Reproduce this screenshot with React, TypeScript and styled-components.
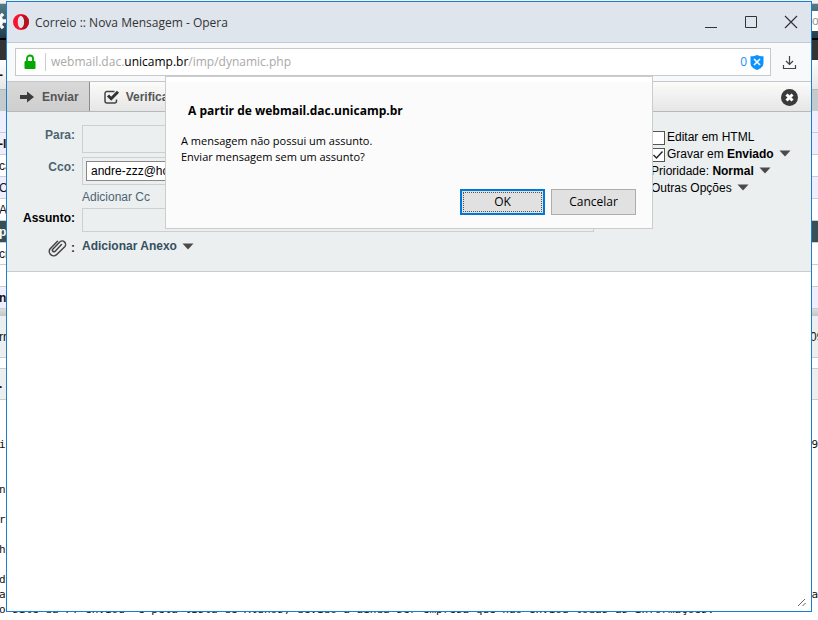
import React from "react";
import styled, { createGlobalStyle } from "styled-components";

const GlobalStyle = createGlobalStyle`
  * { box-sizing: border-box; }
  body { margin: 0; background: #fff; }
  button, input { font: inherit; color: inherit; }
`;

const system = `"Open Sans", "Noto Sans", sans-serif`;
const web = `"Liberation Sans", Arial, sans-serif`;
const mono = `"DejaVu Sans Mono", monospace`;

const Desktop = styled.div`
  position: relative;
  min-height: 100vh;
  overflow: hidden;
  background: #fff;
`;

/* Mailbox page behind the compose window */
const Mailbox = styled.div`
  display: flex;
  flex-direction: column;
  font: 12px/20px ${web};
  color: #111;
`;

const Strip = styled.div<{ $h: number; $bg?: string; $line?: string; $bold?: boolean; $color?: string }>`
  display: flex;
  justify-content: space-between;
  align-items: center;
  height: ${(p) => p.$h}px;
  overflow: hidden;
  white-space: pre;
  background: ${(p) => p.$bg || "#fff"};
  border-bottom: ${(p) => (p.$line ? `1px solid ${p.$line}` : "none")};
  font-weight: ${(p) => (p.$bold ? 700 : 400)};
  color: ${(p) => p.$color || "inherit"};
`;

const Edge = styled.span`
  width: 7px;
  overflow: hidden;
  text-indent: -1px;
`;

const MessageLine = styled.div`
  display: flex;
  justify-content: space-between;
  height: 15px;
  overflow: hidden;
  white-space: pre;
  text-indent: -1px;
  font: 11px/15px ${mono};
  color: #111;
`;

/* Compose window */
const Window = styled.main`
  position: absolute;
  inset: 1px 6px 8px;
  display: flex;
  flex-direction: column;
  border: 1px solid #1a7fd0;
  background: #fff;
`;

const TitleBar = styled.header`
  display: flex;
  align-items: center;
  gap: 6px;
  height: 41px;
  padding: 0 13px 0 6px;
  background: #dfe5ed;
  border-bottom: 1px solid #c6cacf;
  font: 12px/16px ${system};
  color: #333;
`;

const WindowTitle = styled.h1`
  flex: 1;
  margin: 0;
  padding-top: 2px;
  font: inherit;
`;

const WindowControls = styled.div`
  display: flex;
  gap: 26px;
`;

const IconButton = styled.button`
  display: flex;
  padding: 0;
  border: 0;
  background: none;
  color: #333;
`;

const AddressRow = styled.div`
  display: flex;
  align-items: center;
  gap: 11px;
  height: 39px;
  padding: 0 14px 0 8px;
  background: #f7f9fb;
  border-bottom: 1px solid #c4c7c9;
`;

const AddressBox = styled.div`
  display: flex;
  align-items: center;
  flex: 1;
  height: 28px;
  padding: 0 6px 0 8px;
  border: 1px solid #c6c9cc;
  background: #fff;
  font: 12px/18px ${system};
  color: #a9a9a9;
`;

const Divider = styled.span`
  width: 1px;
  height: 18px;
  margin: 0 5px 0 9px;
  background: #ccc;
`;

const Url = styled.span`
  flex: 1;
  b {
    font-weight: 400;
    color: #000;
  }
`;

const Blocked = styled.button`
  display: flex;
  align-items: center;
  gap: 3px;
  padding: 0;
  border: 0;
  background: none;
  font-size: 12px;
  color: #1a90f5;
`;

const Toolbar = styled.nav`
  display: flex;
  align-items: stretch;
  height: 30px;
  background: linear-gradient(#fbfbfa, #e6e6e6);
  border-bottom: 1px solid #b6b9ba;
`;

const ToolButton = styled.button<{ $active?: boolean }>`
  display: flex;
  align-items: center;
  gap: ${(p) => (p.$active ? 7 : 6)}px;
  padding: 0 ${(p) => (p.$active ? 10 : 14)}px 0 ${(p) => (p.$active ? 12 : 14)}px;
  border: 0;
  border-right: 1px solid ${(p) => (p.$active ? "#8c8c8c" : "transparent")};
  background: ${(p) => (p.$active ? "linear-gradient(#d8d8d8, #cfcfcf)" : "none")};
  font: bold 12px/16px ${web};
  color: #555;
`;

const CloseCompose = styled(IconButton)`
  align-items: center;
  margin-left: auto;
  padding: 1px 13px 0 0;
`;

const Form = styled.form`
  display: flex;
  padding: 13px 0 14px;
  background: #ebeff0;
  border-bottom: 1px solid #c8cccd;
  font: 12px/16px ${web};
  color: #36505e;
`;

const Fields = styled.div`
  display: grid;
  flex: 1;
  grid-template-columns: 68px 1fr;
  column-gap: 7px;
  row-gap: 4px;
  align-items: start;
  margin-right: 57px;
`;

const Label = styled.label<{ $strong?: boolean }>`
  padding-top: 2px;
  text-align: right;
  font-weight: 700;
  color: ${(p) => (p.$strong ? "#000" : "#4d6470")};
`;

const TextField = styled.input<{ $h: number }>`
  width: 100%;
  height: ${(p) => p.$h}px;
  padding: 0 4px;
  border: 1px solid #ccd0d1;
  border-radius: 0;
  background: transparent;
  outline: 0;
`;

const RecipientBox = styled.div`
  height: 28px;
  padding: 3px;
  border: 1px solid #ccd0d1;
`;

const Recipient = styled.input`
  display: block;
  width: 160px;
  height: 20px;
  padding: 0 4px;
  border: 1px solid #888;
  background: #fff;
  color: #000;
`;

const FieldLink = styled.a`
  grid-column: 2;
  height: 15px;
  color: #4d6470;
  text-decoration: none;
`;

const AttachLabel = styled.label`
  display: flex;
  justify-content: flex-end;
  align-items: center;
  gap: 3px;
  padding-top: 3px;
  font-weight: 700;
  color: #333;
`;

const MenuButton = styled.button<{ $strong?: boolean }>`
  display: flex;
  align-items: center;
  gap: 5px;
  padding: 0;
  border: 0;
  background: none;
  white-space: nowrap;
  font-weight: ${(p) => (p.$strong ? 700 : 400)};
`;

const AttachButton = styled(MenuButton)`
  padding-top: 2px;
  color: #36505e;
`;

const Options = styled.div`
  display: flex;
  flex-direction: column;
  width: 160px;
  padding-top: 3px;
  color: #000;
`;

const Option = styled.div`
  display: flex;
  align-items: center;
  height: 17px;
  white-space: pre;
`;

const CheckLabel = styled.label`
  display: flex;
  align-items: center;
  gap: 2px;
`;

const Check = styled.input`
  appearance: none;
  width: 14px;
  height: 14px;
  margin: 2px 0 0;
  border: 1px solid #555;
  background: #fff;
  &:checked {
    background: #fff
      url("data:image/svg+xml,%3Csvg xmlns='http://www.w3.org/2000/svg' viewBox='0 0 12 12'%3E%3Cpath d='M1.5 6l3 3 6-6.500' fill='none' stroke='%23222' stroke-width='1.400'/%3E%3C/svg%3E");
  }
`;

const Body = styled.div`
  display: flex;
  flex: 1;
  justify-content: flex-end;
  align-items: flex-end;
  padding: 4px;
`;

const Dialog = styled.section`
  position: absolute;
  top: 74px;
  left: 0;
  right: 0;
  width: 488px;
  max-width: 100%;
  margin: 0 auto;
  padding: 25px 16px 13px 15px;
  border: 1px solid #ccc;
  background: linear-gradient(#fff 5px, #fbfbfb 5px);
  font: 12px/16px ${system};
  color: #000;
`;

const DialogTitle = styled.h2`
  margin: 0 7px 13px;
  font: bold 12px/18px ${system};
`;

const DialogText = styled.p`
  margin: 0 0 24px;
  font-size: 11px;
`;

const DialogActions = styled.div`
  display: flex;
  justify-content: flex-end;
  gap: 6px;
`;

const DialogButton = styled.button<{ $primary?: boolean }>`
  width: 85px;
  height: 26px;
  padding: 0;
  border: ${(p) => (p.$primary ? "2px solid #0078d7" : "1px solid #adadad")};
  outline: ${(p) => (p.$primary ? "1px dotted #555" : "none")};
  outline-offset: -4px;
  background: #e1e1e1;
  color: #000;
`;

const Caret = () => (
  <svg width="12" height="7" viewBox="0 0 12 7" aria-hidden="true">
    <path d="M.5.5h11L6 6.500z" fill="#4a4a4a" />
  </svg>
);

const OperaIcon = () => (
  <svg width="16" height="16" viewBox="0 0 16 16" aria-hidden="true">
    <path
      fillRule="evenodd"
      fill="#f5152f"
      d="M8 0a8 8 0 1 0 0 16A8 8 0 0 0 8 0zm0 2c2 0 3.200 2.600 3.200 6S10 14 8 14s-3.200-2.600-3.200-6S6 2 8 2z"
    />
    <path fill="#b5121f" d="M8 2c1.500-1.500 3.500-1.400 5-.2A8 8 0 0 1 13 14.200c-1.500 1.200-3.500 1.300-5-.2 2 0 3.200-2.600 3.200-6S10 2 8 2z" />
  </svg>
);

const GearIcon = () => (
  <svg width="20" height="20" viewBox="0 0 18 18" aria-hidden="true">
    <circle cx="9" cy="9" r="5" fill="none" stroke="#fff" strokeWidth="3" />
    <path d="M9 0v3M9 15v3M0 9h3M15 9h3M2.600 2.600l2 2M13.400 13.400l2 2M2.600 15.400l2-2M13.400 4.600l2-2" stroke="#fff" strokeWidth="3" />
  </svg>
);

const GearSlot = styled.span`
  display: flex;
  justify-content: flex-end;
  width: 6px;
  overflow: hidden;
  svg {
    flex-shrink: 0;
  }
`;

const SearchEdge = styled.span`
  width: 6px;
  height: 20px;
  overflow: hidden;
  background: #fff;
  color: #999;
`;

type Row = { h: number; bg?: string; line?: string; left?: string; right?: string; bold?: boolean; color?: string };

const headRows: Row[] = [
  { h: 2, bg: "#000" },
  { h: 20, bg: "#333" },
  { h: 30, bg: "linear-gradient(#fdfdfd, #e6e6e6)", line: "#b6b9ba", left: "-", bold: true },
  { h: 21, bg: "#c3cbcd" },
  { h: 22, bg: "#eeeeff", line: "#ccc" },
  { h: 22, bg: "#eeeeff", line: "#ccc", left: "-lo", bold: true },
  { h: 22, line: "#ccc", left: "ca" },
  { h: 22, bg: "#eeeeff", line: "#ccc", left: "C" },
  { h: 22, line: "#ccc", left: "Ar" },
  { h: 22, bg: "#36505a", line: "#ccc", left: "p", bold: true, color: "#fff" },
  { h: 22, line: "#ccc", left: "cn" },
  { h: 22, line: "#ccc" },
  { h: 22, bg: "#eeeeff", line: "#ccc", left: "nl", bold: true },
  { h: 7, bg: "linear-gradient(#ddd, #c4c4c4)" },
  { h: 42, bg: "#ebeff0", line: "#ccc", left: "rn", right: "09" },
  { h: 11, line: "#ccc" },
  { h: 31, bg: "#ebeff0", line: "#ccc", left: ".", bold: true },
  { h: 37 },
];

const messageLines: [string, string][] = [
  ["i", "9"],
  ["", ""],
  ["", ""],
  ["n", ""],
  ["", ""],
  ["r", ""],
  ["", ""],
  ["h", ""],
  ["", ""],
  ["d", ""],
  ["a", "a"],
  ["o site da FT enviou  e pela lista de Alunos, devido a ainda ser empresa que não enviou todas as informações.", ""],
];

export default function App() {
  return (
    <>
      <GlobalStyle />
      <Desktop>
        <Mailbox>
          <Strip $h={4} $bg="#f2f2f2" $line="#ccc" />
          <Strip $h={34} $bg="linear-gradient(#557a88, #1f3d48)">
            <GearSlot>
              <GearIcon />
            </GearSlot>
            <SearchEdge>oc</SearchEdge>
          </Strip>
          {headRows.map((r, i) => (
            <Strip key={i} $h={r.h} $bg={r.bg} $line={r.line} $bold={r.bold} $color={r.color}>
              <Edge>{r.left}</Edge>
              <Edge>{r.right}</Edge>
            </Strip>
          ))}
          {messageLines.map(([left, right], i) => (
            <MessageLine key={i}>
              <span>{left}</span>
              <span>{right}</span>
            </MessageLine>
          ))}
        </Mailbox>

        <Window>
          <TitleBar>
            <OperaIcon />
            <WindowTitle>Correio :: Nova Mensagem - Opera</WindowTitle>
            <WindowControls>
              <IconButton type="button" aria-label="Minimizar">
                <svg width="14" height="14" viewBox="0 0 14 14">
                  <path d="M1 12.500h12" stroke="#333" />
                </svg>
              </IconButton>
              <IconButton type="button" aria-label="Maximizar">
                <svg width="14" height="14" viewBox="0 0 14 14">
                  <path d="M1.500 1.500h11v11h-11z" fill="none" stroke="#333" />
                </svg>
              </IconButton>
              <IconButton type="button" aria-label="Fechar janela">
                <svg width="14" height="14" viewBox="0 0 14 14">
                  <path d="M1 1l12 12M13 1L1 13" stroke="#333" strokeWidth="1.200" />
                </svg>
              </IconButton>
            </WindowControls>
          </TitleBar>

          <AddressRow>
            <AddressBox>
              <svg width="12" height="16" viewBox="0 0 12 16" aria-hidden="true">
                <path d="M3 8V4.500a3 3 0 0 1 6 0V8" fill="none" stroke="#00a800" strokeWidth="1.800" />
                <rect x="0.500" y="7" width="11" height="8" rx="1" fill="#00a800" />
              </svg>
              <Divider />
              <Url>
                webmail.dac.<b>unicamp.br</b>/imp/dynamic.php
              </Url>
              <Blocked type="button" aria-label="Bloqueados: 0">
                0
                <svg width="14" height="15" viewBox="0 0 14 15">
                  <path d="M7 0c2 1 4.500 1.300 6.500 1.200V8c0 3.500-3 5.700-6.500 7C3.500 13.700.5 11.500.5 8V1.200C2.500 1.300 5 1 7 0z" fill="#0a94ff" />
                  <path d="M4 4l6 6M10 4l-6 6" stroke="#fff" strokeWidth="1.600" />
                </svg>
              </Blocked>
            </AddressBox>
            <IconButton type="button" aria-label="Transferências">
              <svg width="15" height="15" viewBox="0 0 15 15" fill="none" stroke="#444" strokeWidth="1.200">
                <path d="M7.500 1v8.500M4 6l3.500 3.500L11 6M1.500 10v3.500h12V10" />
              </svg>
            </IconButton>
          </AddressRow>

          <Toolbar>
            <ToolButton type="button" $active>
              <svg width="16" height="14" viewBox="0 0 16 14" aria-hidden="true">
                <path d="M1 5h7V1.500L15 7l-7 5.500V9H1z" fill="#3c3c3c" />
              </svg>
              Enviar
            </ToolButton>
            <ToolButton type="button">
              <svg width="16" height="14" viewBox="0 0 16 14" aria-hidden="true">
                <path d="M10.500 1.500H3a2 2 0 0 0-2 2V11a2 2 0 0 0 2 2h7.500a2 2 0 0 0 2-2V9.500" fill="none" stroke="#444" strokeWidth="1.500" />
                <path d="M4 5.500L7.200 8.700L14 1.800" fill="none" stroke="#333" strokeWidth="3" />
              </svg>
              Verificar
            </ToolButton>
            <CloseCompose type="button" aria-label="Fechar mensagem">
              <svg width="17" height="17" viewBox="0 0 17 17">
                <circle cx="8.500" cy="8.500" r="8.500" fill="#3a3a3a" />
                <path d="M5.500 5.500l6 6M11.500 5.500l-6 6" stroke="#fff" strokeWidth="3" />
              </svg>
            </CloseCompose>
          </Toolbar>

          <Form onSubmit={(e) => e.preventDefault()}>
            <Fields>
              <Label htmlFor="to">Para:</Label>
              <TextField id="to" $h={28} />
              <Label htmlFor="bcc">Cco:</Label>
              <RecipientBox>
                <Recipient id="bcc" defaultValue="andre-zzz@ho" />
              </RecipientBox>
              <FieldLink href="#cc">Adicionar Cc</FieldLink>
              <Label htmlFor="subject" $strong>
                Assunto:
              </Label>
              <TextField id="subject" $h={24} />
              <AttachLabel htmlFor="attach">
                <svg width="20" height="18" viewBox="0 0 20 18" aria-label="Anexo" fill="none" stroke="#444" strokeWidth="1.500" strokeLinecap="round">
                  <path d="M13.500 5.500L7.200 12.200a1.500 1.500 0 0 1-2.400-2L11.500 3.200a3.400 3.400 0 0 1 5.200 4.600L9 15.300a4.400 4.400 0 0 1-7-5.300L9.500 2.200" />
                </svg>
                :
              </AttachLabel>
              <AttachButton id="attach" type="button" $strong>
                Adicionar Anexo <Caret />
              </AttachButton>
            </Fields>
            <Options>
              <Option>
                <CheckLabel>
                  <Check type="checkbox" />
                  Editar em HTML
                </CheckLabel>
              </Option>
              <Option>
                <CheckLabel>
                  <Check type="checkbox" defaultChecked />
                  {"Gravar em "}
                </CheckLabel>
                <MenuButton type="button" $strong>
                  Enviado <Caret />
                </MenuButton>
              </Option>
              <Option>
                {"Prioridade: "}
                <MenuButton type="button" $strong>
                  Normal <Caret />
                </MenuButton>
              </Option>
              <Option>
                <MenuButton type="button">
                  Outras Opções <Caret />
                </MenuButton>
              </Option>
            </Options>
          </Form>

          <Body>
            <svg width="10" height="10" viewBox="0 0 10 10" aria-hidden="true">
              <path d="M1 9l7-7M5.500 9l3-3" stroke="#666" />
            </svg>
          </Body>

          <Dialog role="dialog" aria-labelledby="dialog-title">
            <DialogTitle id="dialog-title">A partir de webmail.dac.unicamp.br</DialogTitle>
            <DialogText>
              A mensagem não possui um assunto.
              <br />
              Enviar mensagem sem um assunto?
            </DialogText>
            <DialogActions>
              <DialogButton type="button" $primary>
                OK
              </DialogButton>
              <DialogButton type="button">Cancelar</DialogButton>
            </DialogActions>
          </Dialog>
        </Window>
      </Desktop>
    </>
  );
}
